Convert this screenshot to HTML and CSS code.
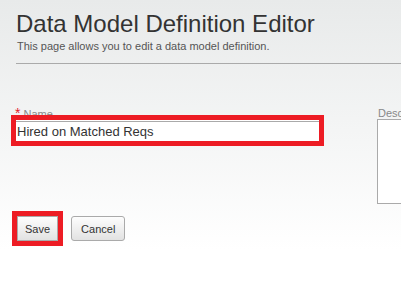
FILE: index.html
```html
<!DOCTYPE html>
<html lang="en">
<head>
  <meta charset="UTF-8" />
  <title>Data Model Definition Editor</title>
  <link rel="stylesheet" href="styles.css">
</head>
<body>
  <div class="page-header">
    <h1>Data Model Definition Editor</h1>
    <p class="subtitle">This page allows you to edit a data model definition.</p>
  </div>

  <div class="form-row">
    <div class="field name-field">
      <label class="field-label"><span class="required">*</span> Name</label>
      <div class="highlight input-box">
        <input type="text" class="text-input" value="Hired on Matched Reqs">
      </div>
    </div>
    <div class="field desc-field">
      <label class="field-label">Description</label>
      <textarea class="desc-input"></textarea>
    </div>
  </div>

  <div class="actions">
    <button class="btn btn-save highlight">Save</button>
    <button class="btn">Cancel</button>
  </div>
</body>
</html>
```

FILE: styles.css
```css
body {
  margin: 0;
  padding: 0;
  font-family: "Liberation Sans", Arial, sans-serif;
  color: #333;
  background: linear-gradient(#e8eaea, #ffffff 250px) no-repeat;
  background-color: #fff;
  min-height: 293px;
  overflow: hidden;
}
.page-header {
  margin-left: 16px;
  padding-top: 10px;
  padding-bottom: 10px;
  border-bottom: 1px solid #aaa;
}
h1 {
  margin: 0;
  font-size: 24px;
  font-weight: normal;
  line-height: 28px;
  color: #333;
}
.subtitle {
  margin: 2px 0 0 1px;
  font-size: 11px;
  line-height: 13px;
  color: #555;
}
.form-row {
  display: flex;
  margin-top: 43px;
  padding-left: 16px;
}
.field {
  flex-shrink: 0;
}
.field-label {
  display: block;
  font-size: 11px;
  line-height: 12px;
  color: #888;
  white-space: nowrap;
}
.required {
  color: #e4202a;
  font-size: 14px;
  margin-left: -1px;
}
.name-field {
  width: 303px;
}
.highlight {
  outline: 5px solid #ed1c24;
}
.input-box {
  background: #fff;
  padding-top: 1px;
}
.text-input {
  display: block;
  box-sizing: border-box;
  width: 100%;
  height: 20px;
  margin: 0;
  padding: 0 0 0 1px;
  border: 0;
  border-top: 1px solid #aaa;
  font-family: "Liberation Sans", Arial, sans-serif;
  font-size: 13px;
  color: #333;
  background: #fff;
}
.desc-field {
  margin-left: 58px;
}
.desc-field .field-label {
  margin-left: 1px;
}
.desc-input {
  display: block;
  box-sizing: border-box;
  width: 200px;
  height: 85px;
  margin: 0;
  border: 1px solid #aaa;
  background: #fff;
  resize: none;
}
.actions {
  display: flex;
  gap: 13px;
  margin-top: 12px;
  padding-left: 17px;
}
.btn {
  height: 25px;
  padding: 0 9px;
  border: 1px solid #aaa;
  border-radius: 3px;
  background: linear-gradient(#fdfdfd, #e2e2e2);
  font-family: "Liberation Sans", Arial, sans-serif;
  font-size: 11px;
  color: #333;
}
.btn-save {
  padding: 0 7px;
  border-radius: 0;
}
```
